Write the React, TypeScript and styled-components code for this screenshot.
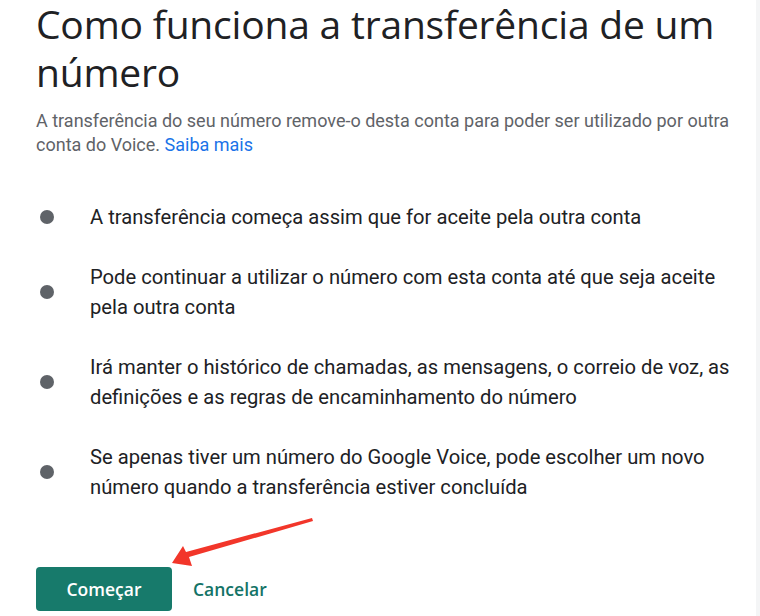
import React from "react";
import styled, { createGlobalStyle } from "styled-components";

const Global = createGlobalStyle`
  html, body { margin: 0; padding: 0; background: #ffffff; }
  body { font-family: Roboto, "Noto Sans", Arial, sans-serif; }
  * { box-sizing: border-box; }
`;

const Page = styled.div`
  position: relative;
  width: 760px;
  height: 616px;
  overflow: hidden;
  display: flex;
  background: #ffffff;
`;

const Content = styled.main`
  flex: 1;
  padding: 0 10px 0 36px;
  display: flex;
  flex-direction: column;
  align-items: flex-start;
`;

const ScrollStrip = styled.div`
  width: 4px;
  background: #f4f5f6;
`;

const Title = styled.h1`
  margin: 0;
  font-family: "Open Sans", "Noto Sans", sans-serif;
  font-weight: 400;
  font-size: 39px;
  line-height: 48px;
  color: #202124;
  letter-spacing: -0.2px;
`;

const Description = styled.p`
  margin: 13px 0 0 0;
  font-size: 18px;
  line-height: 24px;
  color: #5f6368;
`;

const Link = styled.a`
  color: #1a73e8;
  text-decoration: none;
`;

const List = styled.ul`
  list-style: none;
  margin: 45px 0 0 0;
  padding: 0;
  display: flex;
  flex-direction: column;
  gap: 30px;
`;

const Item = styled.li`
  display: flex;
  align-items: center;
  gap: 36px;
`;

const Dot = styled.span`
  flex: none;
  width: 14px;
  height: 14px;
  margin-left: 4px;
  border-radius: 50%;
  background: #5f6368;
`;

const ItemText = styled.span`
  font-size: 20.2px;
  line-height: 30px;
  color: #202124;
`;

const Actions = styled.div`
  margin-top: 65px;
  display: flex;
  align-items: center;
  gap: 21px;
`;

const Button = styled.button<{ $primary?: boolean }>`
  height: 44px;
  border: none;
  border-radius: 4px;
  padding: 0;
  width: ${(p) => (p.$primary ? "136px" : "auto")};
  background: ${(p) => (p.$primary ? "#177a6b" : "transparent")};
  color: ${(p) => (p.$primary ? "#ffffff" : "#137366")};
  font-family: "Open Sans", "Noto Sans", sans-serif;
  font-weight: 600;
  font-size: 17.5px;
  cursor: pointer;
`;

const Arrow = styled.svg`
  position: absolute;
  left: 0;
  top: 0;
  pointer-events: none;
`;

const items = [
  "A transferência começa assim que for aceite pela outra conta",
  "Pode continuar a utilizar o número com esta conta até que seja aceite pela outra conta",
  "Irá manter o histórico de chamadas, as mensagens, o correio de voz, as definições e as regras de encaminhamento do número",
  "Se apenas tiver um número do Google Voice, pode escolher um novo número quando a transferência estiver concluída",
];

export default function App() {
  return (
    <>
      <Global />
      <Page>
        <Content>
          <Title>Como funciona a transferência de um número</Title>
          <Description>
            A transferência do seu número remove-o desta conta para poder ser utilizado por outra
            conta do Voice. <Link href="#">Saiba mais</Link>
          </Description>
          <List>
            {items.map((t) => (
              <Item key={t}>
                <Dot />
                <ItemText>{t}</ItemText>
              </Item>
            ))}
          </List>
          <Actions>
            <Button $primary>Começar</Button>
            <Button>Cancelar</Button>
          </Actions>
        </Content>
        <ScrollStrip />
        <Arrow width="760" height="616" viewBox="0 0 760 616">
          <polygon points="312,518 313,521 189,557 192,566 172,563 183,546 186,552" fill="#f2362a" />
        </Arrow>
      </Page>
    </>
  );
}
